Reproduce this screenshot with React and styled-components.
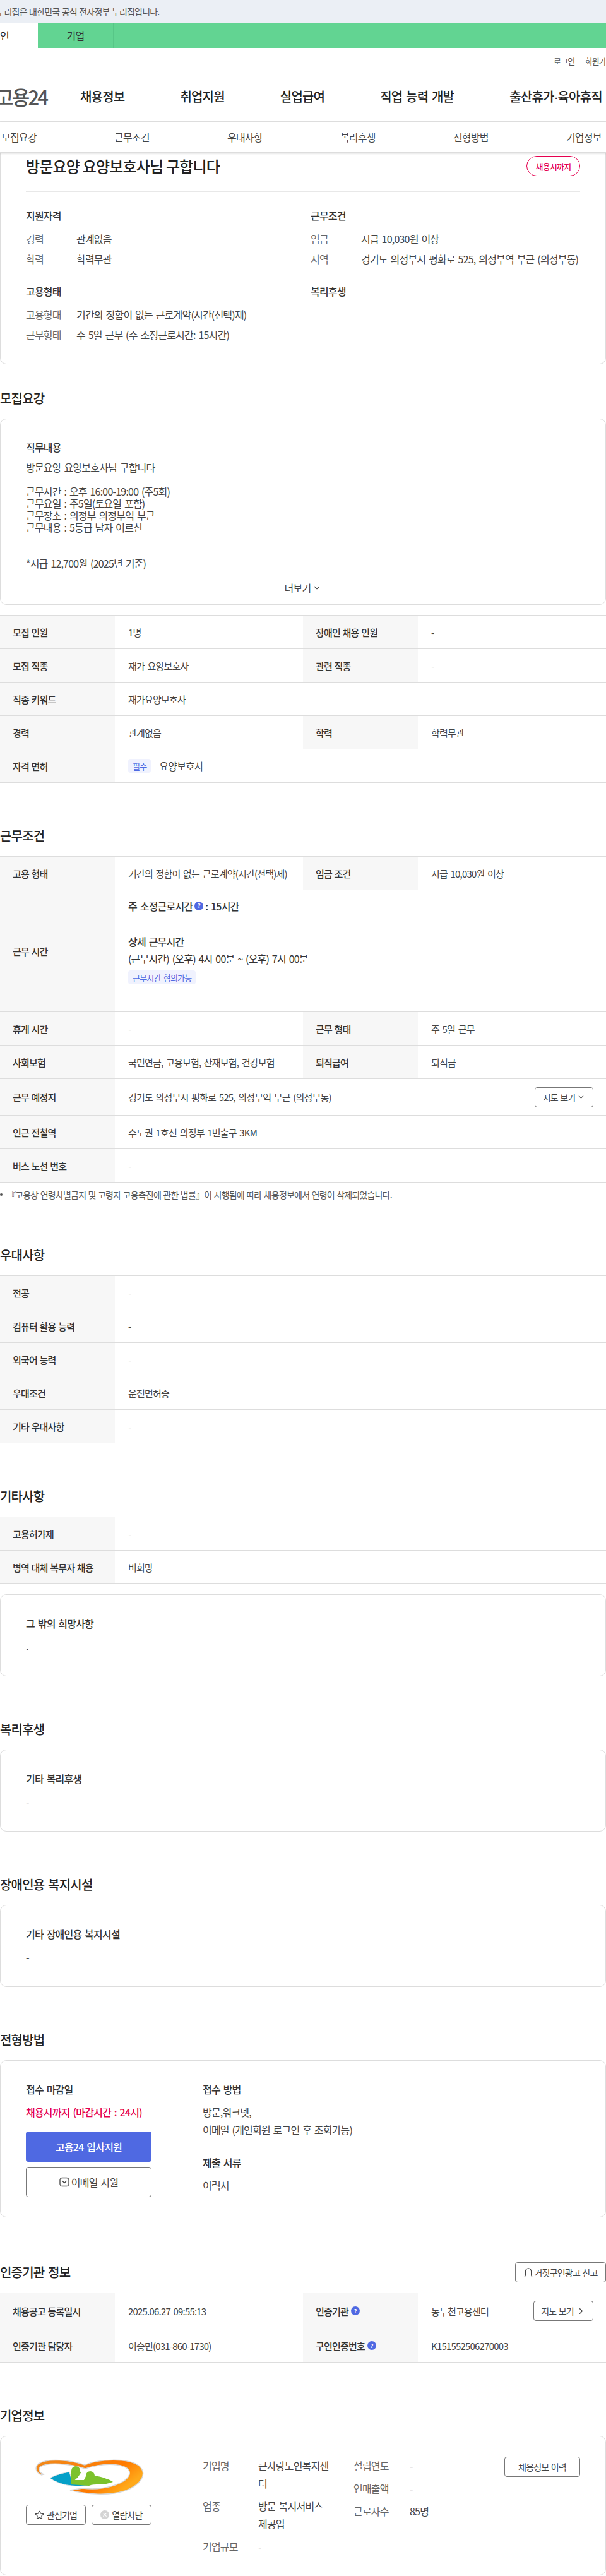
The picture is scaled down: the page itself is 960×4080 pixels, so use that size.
import React from "react";
import styled, { createGlobalStyle } from "styled-components";
import { ChevronDown, ChevronRight, Star } from "lucide-react";

const Global = createGlobalStyle`
  html, body { margin: 0; padding: 0; background: #fff; }
  body {
    width: 960px; overflow-x: hidden;
    font-family: "Noto Sans CJK KR", "Noto Sans", sans-serif;
    letter-spacing: -0.05em; word-spacing: 2px; color: #444;
  }
  * { box-sizing: border-box; }
`;

const Page = styled.div`width: 960px; height: 4080px; overflow: hidden; display: flex; flex-direction: column;`;
const GovBar = styled.div`height: 36px; flex: none; background: #ebeff5; display: flex; align-items: center; font-size: 14px; color: #555; white-space: nowrap; padding-bottom: 1px; word-spacing: 1px;`;
const GovText = styled.span`margin-left: -21px;`;
const GreenBar = styled.div`height: 40px; background: #62d492; display: flex; flex: none;`;
const PersonTab = styled.div`width: 60px; background: #fff; font-size: 16px; color: #222; display: flex; align-items: center; overflow: hidden; white-space: nowrap;`;
const PersonText = styled.span`margin-left: -14px;`;
const CompanyTab = styled.div`width: 120px; font-size: 16px; color: #333; display: flex; align-items: center; justify-content: center; border-right: 1px solid #57c687;`;
const UtilRow = styled.div`height: 40px; display: flex; align-items: center; gap: 16px; padding-left: 877px; font-size: 13px; color: #555; white-space: nowrap; flex: none;`;
const NavRow = styled.div`height: 77px; display: flex; align-items: center; border-bottom: 1px solid #e4e4e4; white-space: nowrap; flex: none; padding-bottom: 3px;`;
const Logo = styled.div`margin-left: -7px; width: 81px; font-size: 31px; font-weight: 500; color: #555; letter-spacing: -0.09em; margin-right: 53px; flex: none;`;
const NavItems = styled.div`display: flex; gap: 88px;`;
const NavItem = styled.div`font-size: 20px; font-weight: 500; color: #222;`;
const NavDot = styled.span`font-family: "Liberation Sans", sans-serif;`;
const SubTabs = styled.div`height: 49px; display: flex; align-items: center; padding-left: 2px; gap: 123.3px; font-size: 16px; color: #444; white-space: nowrap; flex: none; border-bottom: 1px solid #ddd; box-shadow: 0 1px 3px rgba(0,0,0,.18); position: relative; z-index: 1;`;

const Card = styled.div`border: 1px solid #ddd; border-radius: 10px; background: #fff; flex: none;`;
const SummaryCard = styled(Card)`border-top: 0; border-radius: 0 0 10px 10px; padding: 5px 40px 26px;`;
const TitleRow = styled.div`display: flex; justify-content: space-between; align-items: flex-start; height: 57px; border-bottom: 1px solid #e8e8e8;`;
const Title = styled.h1`margin: 0; font-size: 24px; line-height: 32px; font-weight: 500; color: #222; word-spacing: 0;`;
const Pill = styled.div`width: 85px; height: 32px; border: 1px solid #e5004f; border-radius: 16px; color: #e5004f; font-size: 13px; font-weight: 500; display: flex; align-items: center; justify-content: center;`;
const SummaryGrid = styled.div`display: grid; grid-template-columns: 451px 1fr;`;
const Group = styled.div`margin-top: ${p => p.$top}px;`;
const GroupHead = styled.div`font-size: 16px; line-height: 22px; font-weight: 500; color: #333; margin-bottom: 14px;`;
const SumRow = styled.div`display: flex; font-size: 16px; line-height: 24px; margin-bottom: 8px; white-space: pre;`;
const SumLabel = styled.div`width: 80px; color: #666;`;

const SectionHead = styled.div`margin-top: ${p => p.$top ?? 70}px; margin-bottom: 18px; height: 28px; flex: none; display: flex; justify-content: space-between; align-items: center;`;
const SectionTitle = styled.h2`margin: 0; font-size: 20px; line-height: 28px; font-weight: 500; color: #222;`;

const JobCard = styled(Card)`height: 295px; display: flex; flex-direction: column;`;
const JobBody = styled.div`height: 240px; overflow: hidden; padding: 33px 40px 0; flex: none;`;
const TextHead = styled.div`font-size: 16px; line-height: 22px; font-weight: 500; color: #333; margin-bottom: ${p => p.$gap ?? 14}px;`;
const Pre = styled.div`white-space: pre-wrap; font-size: 16px; line-height: 19px; color: #444;`;
const MoreRow = styled.div`flex: 1; border-top: 1px solid #ddd; display: flex; align-items: center; justify-content: center; gap: 3px; font-size: 16px; color: #444;`;

const Table = styled.div`border-top: 1px solid #ddd; flex: none; margin-top: ${p => p.$top ?? 0}px;`;
const Row = styled.div`display: grid; grid-template-columns: 182px 298px 182px 298px; min-height: ${p => p.$h ?? 53}px; border-bottom: 1px solid #ddd;`;
const Th = styled.div`background: #f7f7f7; padding-left: 20px; display: flex; align-items: center; font-size: 15px; font-weight: 500; color: #333; white-space: pre; gap: 4px; word-spacing: 1px;`;
const Td = styled.div`padding: 0 21px; display: flex; align-items: center; font-size: 15px; color: #444; white-space: nowrap; justify-content: ${p => p.$between ? "space-between" : "flex-start"}; grid-column: ${p => p.$wide ? "2 / 5" : "auto"}; padding-right: ${p => p.$between ? "20px" : "21px"};`;
const Tag = styled.span`display: inline-flex; align-items: center; justify-content: center; height: 22px; padding: 0 7px; background: #f0f2fe; border-radius: 4px; color: #4f69e2; font-size: 13px; margin-top: ${p => p.$top ?? 0}px;`;
const LicenseText = styled.span`margin-left: 13px; font-size: 16px;`;
const Help = styled.span`display: inline-flex; width: 14px; height: 14px; border-radius: 50%; background: #4f69e2; color: #fff; font-size: 9px; font-weight: 700; align-items: center; justify-content: center; letter-spacing: 0;`;
const HoursCell = styled(Td)`flex-direction: column; align-items: flex-start; justify-content: flex-start; padding-top: 13px;`;
const HoursLine = styled.div`font-size: 16px; line-height: 24px; display: flex; align-items: center; gap: 3px; color: #333; white-space: pre; font-weight: ${p => p.$strong ? 500 : 400}; margin-top: ${p => p.$top ?? 0}px;`;
const ButtonBase = styled.div`display: inline-flex; align-items: center; justify-content: center; border: 1px solid #777; border-radius: 4px; background: #fff; color: #444; white-space: pre; flex: none;`;
const SmallButton = styled(ButtonBase)`width: ${p => p.$w}px; height: ${p => p.$h ?? 32}px; font-size: 14px; gap: ${p => p.$gap ?? 4}px; word-spacing: 1px;`;
const Note = styled.div`margin-top: 9px; height: 20px; font-size: 14px; line-height: 20px; color: #555; flex: none; display: flex; align-items: center; white-space: pre; word-spacing: 1px;`;
const Bullet = styled.span`width: 4px; height: 4px; border-radius: 50%; background: #555; margin-right: 7px;`;

const TextCard = styled(Card)`height: 130px; padding: 34px 40px 0; margin-top: ${p => p.$top ?? 0}px;`;
const TextBody = styled.div`font-size: 16px; line-height: 22px; color: #444;`;

const ApplyCard = styled(Card)`height: 249px; padding: 32px 40px 0; display: flex;`;
const ApplyLeft = styled.div`width: 199px; height: 184px; flex: none;`;
const Divider = styled.div`width: 1px; height: ${p => p.$h}px; background: #e8e8e8; margin: 0 40px; flex: none;`;
const ApplyRight = styled.div`flex: 1;`;
const ApplyHead = styled.div`font-size: 16px; line-height: 26px; font-weight: 500; color: #333; margin-top: ${p => p.$top ?? 0}px; margin-bottom: 9px;`;
const ApplyValue = styled.div`font-size: 16px; line-height: 28px; color: #444;`;
const Deadline = styled(ApplyValue)`color: #e5004f; font-weight: 500; margin-bottom: 17px; white-space: nowrap;`;
const BlueButton = styled.div`height: 48px; border-radius: 4px; background: #4f69e2; color: #fff; font-size: 16px; font-weight: 500; display: flex; align-items: center; justify-content: center; margin-bottom: 8px;`;
const OutlineButton = styled(ButtonBase)`width: 100%; height: 48px; font-size: 16px; gap: 3px;`;

const CompanyCard = styled(Card)`height: 221px; padding: 32px 40px 0; display: flex;`;
const CompanyLeft = styled.div`width: 199px; flex: none;`;
const LogoBox = styled.div`height: 76px; display: flex; justify-content: center; padding-top: 4px;`;
const CompanyButtons = styled.div`display: flex; justify-content: space-between;`;
const InfoCol = styled.div`width: ${p => p.$w}px; flex: none; display: flex; flex-direction: column; gap: 8px;`;
const InfoRow = styled.div`display: flex; font-size: 16px; line-height: 28px;`;
const InfoLabel = styled.div`width: ${p => p.$w}px; color: #666; flex: none;`;
const InfoValue = styled.div`width: ${p => p.$w}px; color: #444; word-break: ${p => p.$breakAll ? "break-all" : "keep-all"}; flex: none;`;
const HistoryButton = styled(SmallButton)`margin-left: auto;`;

const Mail = () => (
  <svg width="16" height="16" viewBox="0 0 16 16" fill="none" stroke="#444" strokeWidth="1.3">
    <rect x="1" y="1.5" width="14" height="13" rx="3.5" />
    <path d="M5 6.5 8 9.5 11 6.5" strokeLinecap="round" strokeLinejoin="round" />
  </svg>
);
const Bell = () => (
  <svg width="14" height="17" viewBox="0 0 14 17" fill="none" stroke="#444" strokeWidth="1.2">
    <path d="M1 15.5h12L11.6 13V6.5a4.6 4.6 0 0 0-9.2 0V13z" strokeLinejoin="round" />
  </svg>
);
const BlockIcon = () => (
  <svg width="14" height="14" viewBox="0 0 14 14">
    <circle cx="7" cy="7" r="7" fill="#d4d4d4" />
    <path d="M4.4 4.4l5.2 5.2M9.6 4.4 4.4 9.6" stroke="#fff" strokeWidth="1.2" />
  </svg>
);
const CompanyLogo = () => (
  <svg width="176" height="56" viewBox="0 0 176 56">
    <defs>
      <linearGradient id="orange" x1="0" x2="1" y1="0" y2="0.4">
        <stop offset="0" stopColor="#f08a1d" />
        <stop offset="0.75" stopColor="#ff7a00" />
        <stop offset="1" stopColor="#ffa91a" />
      </linearGradient>
    </defs>
    <path d="M13 25C4 22 1 13 8 7 22-2 58 1 81 9 102 0 150-3 168 11 181 24 170 41 145 50 120 58 85 56 58 49L78 46C110 50 146 40 152 24 156 8 118 3 82 15 58 7 22 4 11 12 7 16 9 21 16 24Z" fill="url(#orange)" stroke="#d8d8d8" strokeWidth="1.5" />
    <path d="M26 30C34 25 46 22 57 20L62 38 98 35C96 40 90 42 82 42 62 44 42 41 26 30Z" fill="#05a0c8" stroke="#e2e2e2" strokeWidth="1" />
    <circle cx="67" cy="18" r="7" fill="#7cc22c" />
    <path d="M60 19 76 20 70 29 60 38Z" fill="#7cc22c" />
    <circle cx="90" cy="26" r="7" fill="#7cc22c" />
    <path d="M60 33 80 33 84 25 102 27C112 29 122 33 126 36 112 42 96 38 88 42L60 40Z" fill="#7cc22c" />
  </svg>
);

const Kv = ({ a, b, c, d }) => (
  <Row>
    <Th>{a}</Th><Td>{b}</Td><Th>{c}</Th><Td>{d}</Td>
  </Row>
);
const Wide = ({ a, b, h }) => (
  <Row $h={h}><Th>{a}</Th><Td $wide>{b}</Td></Row>
);

const job = `방문요양 요양보호사님 구합니다

근무시간 : 오후 16:00-19:00 (주5회)
근무요일 : 주5일(토요일 포함)
근무장소 : 의정부 의정부역 부근
근무내용 : 5등급 남자 어르신


*시급 12,700원 (2025년 기준)
근무 시작일 : 협의`;

export default function App() {
  return (
    <Page>
      <Global />
      <GovBar><GovText>이 누리집은 대한민국 공식 전자정부 누리집입니다.</GovText></GovBar>
      <GreenBar>
        <PersonTab><PersonText>개인</PersonText></PersonTab>
        <CompanyTab>기업</CompanyTab>
      </GreenBar>
      <UtilRow><span>로그인</span><span>회원가입</span></UtilRow>
      <NavRow>
        <Logo>고용24</Logo>
        <NavItems>
          <NavItem>채용정보</NavItem>
          <NavItem>취업지원</NavItem>
          <NavItem>실업급여</NavItem>
          <NavItem>직업 능력 개발</NavItem>
          <NavItem>출산휴가<NavDot>·</NavDot>육아휴직</NavItem>
        </NavItems>
      </NavRow>
      <SubTabs>
        <span>모집요강</span><span>근무조건</span><span>우대사항</span>
        <span>복리후생</span><span>전형방법</span><span>기업정보</span>
      </SubTabs>

      <SummaryCard>
        <TitleRow>
          <Title>방문요양 요양보호사님 구합니다</Title>
          <Pill>채용시까지</Pill>
        </TitleRow>
        <SummaryGrid>
          <Group $top={26}>
            <GroupHead>지원자격</GroupHead>
            <SumRow><SumLabel>경력</SumLabel>관계없음</SumRow>
            <SumRow><SumLabel>학력</SumLabel>학력무관</SumRow>
          </Group>
          <Group $top={26}>
            <GroupHead>근무조건</GroupHead>
            <SumRow><SumLabel>임금</SumLabel>시급 10,030원 이상</SumRow>
            <SumRow><SumLabel>지역</SumLabel>경기도 의정부시 평화로 525, 의정부역 부근 (의정부동)</SumRow>
          </Group>
          <Group $top={20}>
            <GroupHead>고용형태</GroupHead>
            <SumRow><SumLabel>고용형태</SumLabel>기간의 정함이 없는 근로계약(시간(선택)제)</SumRow>
            <SumRow><SumLabel>근무형태</SumLabel>주 5일 근무 (주 소정근로시간: 15시간)</SumRow>
          </Group>
          <Group $top={20}>
            <GroupHead>복리후생</GroupHead>
          </Group>
        </SummaryGrid>
      </SummaryCard>

      <SectionHead $top={40}><SectionTitle>모집요강</SectionTitle></SectionHead>
      <JobCard>
        <JobBody>
          <TextHead $gap={12}>직무내용</TextHead>
          <Pre>{job}</Pre>
        </JobBody>
        <MoreRow>더보기 <ChevronDown size={14} color="#444" strokeWidth={2} /></MoreRow>
      </JobCard>
      <Table $top={16}>
        <Kv a="모집 인원" b="1명" c="장애인 채용 인원" d="-" />
        <Kv a="모집 직종" b="재가 요양보호사" c="관련 직종" d="-" />
        <Wide a="직종 키워드" b="재가요양보호사" />
        <Kv a="경력" b="관계없음" c="학력" d="학력무관" />
        <Wide a="자격 면허" b={<><Tag>필수</Tag><LicenseText>요양보호사</LicenseText></>} />
      </Table>

      <SectionHead><SectionTitle>근무조건</SectionTitle></SectionHead>
      <Table>
        <Kv a="고용 형태" b="기간의 정함이 없는 근로계약(시간(선택)제)" c="임금 조건" d="시급 10,030원 이상" />
        <Row $h={193}>
          <Th>근무 시간</Th>
          <HoursCell $wide>
            <HoursLine $strong>주 소정근로시간<Help>?</Help>: 15시간</HoursLine>
            <HoursLine $strong $top={32}>상세 근무시간</HoursLine>
            <HoursLine $top={3}>(근무시간) (오후) 4시 00분 ~ (오후) 7시 00분</HoursLine>
            <Tag $top={7}>근무시간 협의가능</Tag>
          </HoursCell>
        </Row>
        <Kv a="휴게 시간" b="-" c="근무 형태" d="주 5일 근무" />
        <Kv a="사회보험" b="국민연금, 고용보험, 산재보험, 건강보험" c="퇴직급여" d="퇴직금" />
        <Row $h={58}>
          <Th>근무 예정지</Th>
          <Td $wide $between>
            <span>경기도 의정부시 평화로 525, 의정부역 부근 (의정부동)</span>
            <SmallButton $w={93} $gap={3}>지도 보기<ChevronDown size={13} color="#444" /></SmallButton>
          </Td>
        </Row>
        <Wide a="인근 전철역" b="수도권 1호선 의정부 1번출구 3KM" />
        <Wide a="버스 노선 번호" b="-" />
      </Table>
      <Note><Bullet />『고용상 연령차별금지 및 고령자 고용촉진에 관한 법률』이 시행됨에 따라 채용정보에서 연령이 삭제되었습니다.</Note>

      <SectionHead $top={72}><SectionTitle>우대사항</SectionTitle></SectionHead>
      <Table>
        <Wide a="전공" b="-" />
        <Wide a="컴퓨터 활용 능력" b="-" />
        <Wide a="외국어 능력" b="-" />
        <Wide a="우대조건" b="운전면허증" />
        <Wide a="기타 우대사항" b="-" />
      </Table>

      <SectionHead><SectionTitle>기타사항</SectionTitle></SectionHead>
      <Table>
        <Wide a="고용허가제" b="-" />
        <Wide a="병역 대체 복무자 채용" b="비희망" />
      </Table>
      <TextCard $top={16}>
        <TextHead>그 밖의 희망사항</TextHead>
        <TextBody>.</TextBody>
      </TextCard>

      <SectionHead><SectionTitle>복리후생</SectionTitle></SectionHead>
      <TextCard>
        <TextHead>기타 복리후생</TextHead>
        <TextBody>-</TextBody>
      </TextCard>

      <SectionHead><SectionTitle>장애인용 복지시설</SectionTitle></SectionHead>
      <TextCard>
        <TextHead>기타 장애인용 복지시설</TextHead>
        <TextBody>-</TextBody>
      </TextCard>

      <SectionHead><SectionTitle>전형방법</SectionTitle></SectionHead>
      <ApplyCard>
        <ApplyLeft>
          <ApplyHead>접수 마감일</ApplyHead>
          <Deadline>채용시까지 (마감시간 : 24시)</Deadline>
          <BlueButton>고용24 입사지원</BlueButton>
          <OutlineButton><Mail />이메일 지원</OutlineButton>
        </ApplyLeft>
        <Divider $h={184} />
        <ApplyRight>
          <ApplyHead>접수 방법</ApplyHead>
          <ApplyValue>방문,워크넷,</ApplyValue>
          <ApplyValue>이메일 (개인회원 로그인 후 조회가능)</ApplyValue>
          <ApplyHead $top={25}>제출 서류</ApplyHead>
          <ApplyValue>이력서</ApplyValue>
        </ApplyRight>
      </ApplyCard>

      <SectionHead $top={73}>
        <SectionTitle>인증기관 정보</SectionTitle>
        <SmallButton $w={144} $h={32} $gap={3}><Bell />거짓구인광고 신고</SmallButton>
      </SectionHead>
      <Table>
        <Row $h={57}>
          <Th>채용공고 등록일시</Th>
          <Td>2025.06.27 09:55:13</Td>
          <Th>인증기관<Help>?</Help></Th>
          <Td $between>동두천고용센터<SmallButton $w={95}>지도 보기<ChevronRight size={15} color="#444" /></SmallButton></Td>
        </Row>
        <Row>
          <Th>인증기관 담당자</Th>
          <Td>이승민(031-860-1730)</Td>
          <Th>구인인증번호<Help>?</Help></Th>
          <Td>K151552506270003</Td>
        </Row>
      </Table>

      <SectionHead><SectionTitle>기업정보</SectionTitle></SectionHead>
      <CompanyCard>
        <CompanyLeft>
          <LogoBox><CompanyLogo /></LogoBox>
          <CompanyButtons>
            <SmallButton $w={95}><Star size={15} color="#444" />관심기업</SmallButton>
            <SmallButton $w={95}><BlockIcon />열람차단</SmallButton>
          </CompanyButtons>
        </CompanyLeft>
        <Divider $h={155} />
        <InfoCol $w={239}>
          <InfoRow><InfoLabel $w={88}>기업명</InfoLabel><InfoValue $w={120} $breakAll>큰사랑노인복지센터</InfoValue></InfoRow>
          <InfoRow><InfoLabel $w={88}>업종</InfoLabel><InfoValue $w={120}>방문 복지서비스 제공업</InfoValue></InfoRow>
          <InfoRow><InfoLabel $w={88}>기업규모</InfoLabel><InfoValue $w={120}>-</InfoValue></InfoRow>
        </InfoCol>
        <InfoCol $w={160}>
          <InfoRow><InfoLabel $w={89}>설립연도</InfoLabel><InfoValue $w={60}>-</InfoValue></InfoRow>
          <InfoRow><InfoLabel $w={89}>연매출액</InfoLabel><InfoValue $w={60}>-</InfoValue></InfoRow>
          <InfoRow><InfoLabel $w={89}>근로자수</InfoLabel><InfoValue $w={60}>85명</InfoValue></InfoRow>
        </InfoCol>
        <HistoryButton $w={120}>채용정보 이력</HistoryButton>
      </CompanyCard>
    </Page>
  );
}
